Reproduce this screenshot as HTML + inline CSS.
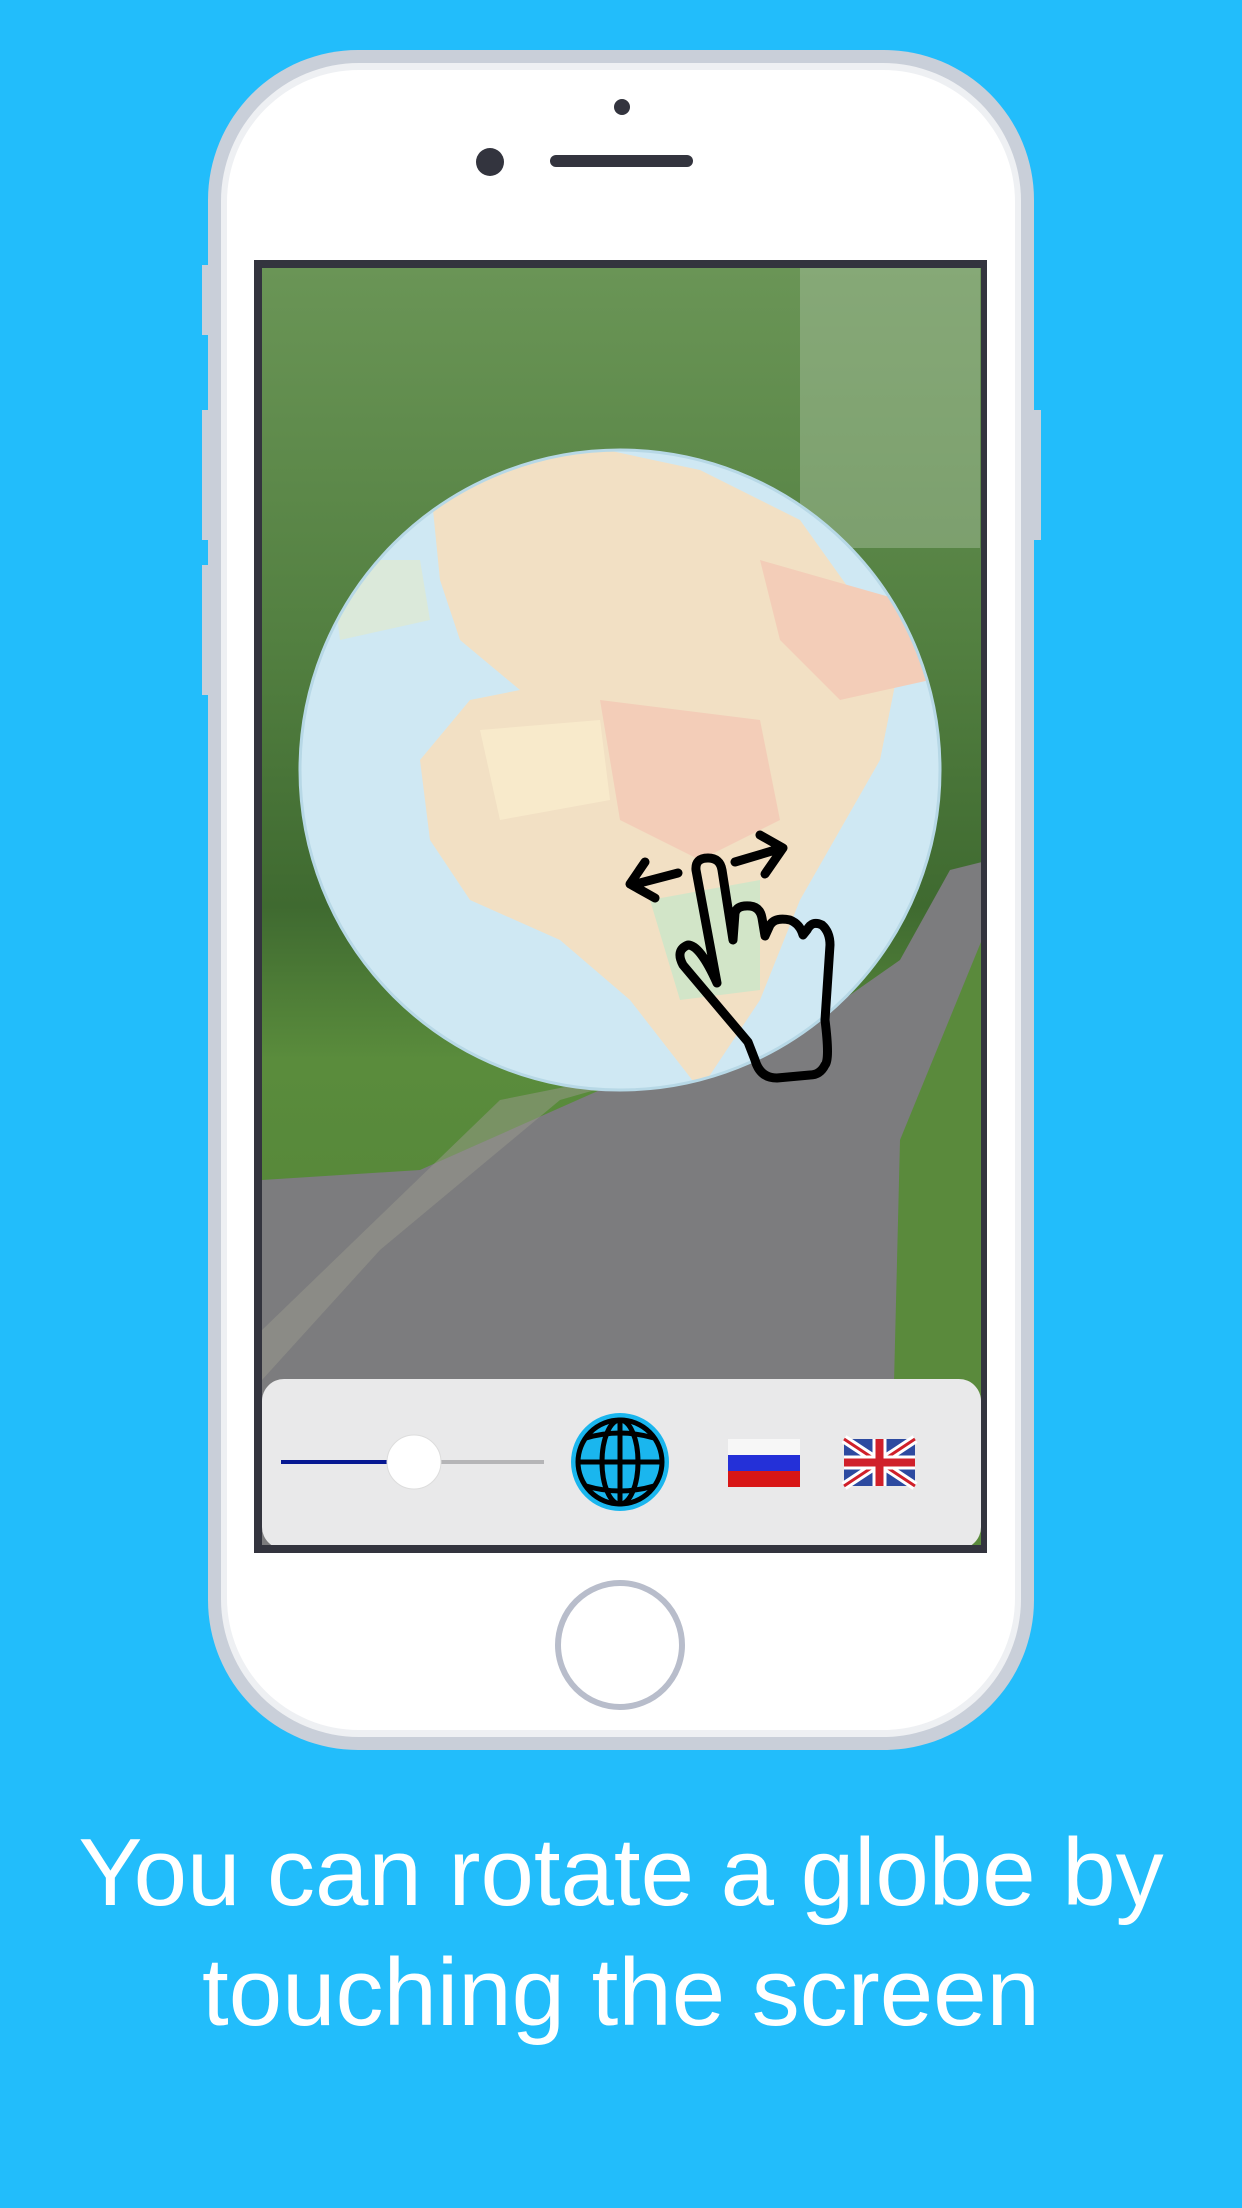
<!DOCTYPE html>
<html><head><meta charset="utf-8"><style>
html,body{margin:0;padding:0}
body{width:1242px;height:2208px;background:#22bdfb;position:relative;overflow:hidden;font-family:"Liberation Sans",sans-serif}
.abs{position:absolute}
.txt{position:absolute;left:0;width:1242px;text-align:center;color:#fff;font-size:96px;line-height:120px}
</style></head><body>
<svg class="abs" style="left:0;top:0" width="1242" height="1760" viewBox="0 0 1242 1760">
<defs>
<linearGradient id="sky" x1="0" y1="0" x2="0" y2="1">
<stop offset="0" stop-color="#6a9556"/><stop offset="0.3" stop-color="#527f40"/><stop offset="0.5" stop-color="#3f6a30"/><stop offset="0.62" stop-color="#5a8c3c"/><stop offset="1" stop-color="#4f7f35"/></linearGradient>
<clipPath id="scr"><rect x="262" y="268" width="719" height="1277"/></clipPath>
<clipPath id="gc"><circle cx="620" cy="770" r="320"/></clipPath>
</defs>
<rect x="202" y="265" width="8" height="70" fill="#c9cfd9"/>
<rect x="202" y="410" width="8" height="130" fill="#c9cfd9"/>
<rect x="202" y="565" width="8" height="130" fill="#c9cfd9"/>
<rect x="1033" y="410" width="8" height="130" fill="#c9cfd9"/>
<rect x="208" y="50" width="826" height="1700" rx="150" fill="#c9cfd9"/>
<rect x="221" y="63" width="800" height="1674" rx="138" fill="#eef0f3"/>
<rect x="227" y="70" width="788" height="1660" rx="132" fill="#fff"/>
<circle cx="622" cy="107" r="8" fill="#33343e"/>
<circle cx="490" cy="162" r="14" fill="#33343e"/>
<rect x="550" y="155" width="143" height="12" rx="6" fill="#33343e"/>
<rect x="254" y="260" width="733" height="1293" fill="#33343e"/>
<g clip-path="url(#scr)">
<rect x="262" y="268" width="719" height="1277" fill="url(#sky)"/>
<rect x="800" y="268" width="180" height="280" fill="#a9c2a0" opacity="0.45"/>
<path d="M262,1180 L262,1545 L560,1545 L990,1545 L990,860 L950,870 L900,960 L800,1030 L600,1090 L420,1170 Z" fill="#7c7c7e"/>
<path d="M262,1330 L500,1100 L700,1060 L560,1100 L380,1250 L262,1380Z" fill="#9a9a8e" opacity="0.5"/>
<path d="M890,1545 L900,1140 L990,920 L990,1545Z" fill="#5a8a3c"/>
<circle cx="620" cy="770" r="320" fill="#cfe8f3"/>
<g clip-path="url(#gc)">
<path d="M430,480 L560,440 L700,470 L800,520 L900,660 L880,760 L800,900 L760,1000 L700,1090 L630,1000 L560,940 L470,900 L430,840 L420,760 L470,700 L520,690 L460,640 L440,580Z" fill="#f2e0c4"/>
<path d="M600,700 L760,720 L780,820 L700,860 L620,820Z" fill="#f3cdb8"/>
<path d="M480,730 L600,720 L610,800 L500,820Z" fill="#f8eacb"/>
<path d="M650,900 L760,880 L760,990 L680,1000Z" fill="#d2e5c8"/>
<path d="M760,560 L900,600 L930,680 L840,700 L780,640Z" fill="#f3cdb8"/>
<path d="M330,560 L420,560 L430,620 L340,640Z" fill="#dfe9cf" opacity="0.7"/>
</g>
<circle cx="620" cy="770" r="320" fill="none" stroke="#b7d8e6" stroke-width="3"/>
<g fill="none" stroke="#000" stroke-width="9" stroke-linecap="round" stroke-linejoin="round">
<path d="M717,983 L696,870 Q695,858 708,858 Q720,858 722,870 L733,940 L735,913 Q737,905 750,906 Q760,907 762,918 L765,936 L770,925 Q775,917 790,920 Q800,924 803,935 L807,930 Q812,920 822,925 Q830,932 830,945 L825,1020 Q830,1060 825,1065 Q820,1075 810,1075 L777,1078 Q760,1078 755,1060 L748,1042 L683,965 Q675,950 688,945 Q700,945 717,983"/>
<path d="M678,873 L632,885 M645,862 L630,884 L655,898"/>
<path d="M735,862 L782,848 M760,835 L783,848 L765,874"/>
</g>
<rect x="262" y="1379" width="719" height="170" rx="22" fill="#e9e9ea"/>
<rect x="281" y="1460" width="133" height="4" fill="#061892"/>
<rect x="414" y="1460" width="130" height="4" fill="#b5b5b7"/>
<circle cx="414" cy="1462" r="27" fill="#fff" stroke="#ddd" stroke-width="1"/>
<circle cx="620" cy="1462" r="49" fill="#1ab6ee"/>
<g fill="none" stroke="#000" stroke-width="5">
<circle cx="620" cy="1462" r="42"/>
<ellipse cx="620" cy="1462" rx="18" ry="42"/>
<line x1="620" y1="1420" x2="620" y2="1504"/>
<line x1="578" y1="1462" x2="662" y2="1462"/>
<path d="M586,1438 Q620,1428 654,1438 M586,1486 Q620,1496 654,1486"/>
</g>
<rect x="728" y="1439" width="72" height="16" fill="#f7f7f7"/>
<rect x="728" y="1455" width="72" height="16" fill="#2430d8"/>
<rect x="728" y="1471" width="72" height="16" fill="#d81616"/>
<g>
<rect x="844" y="1439" width="71" height="47" fill="#2d4aa0"/>
<path d="M844,1439 L915,1486 M915,1439 L844,1486" stroke="#fff" stroke-width="9"/>
<path d="M844,1439 L915,1486 M915,1439 L844,1486" stroke="#d0202a" stroke-width="3"/>
<path d="M879.5,1439 V1486 M844,1462.5 H915" stroke="#fff" stroke-width="14"/>
<path d="M879.5,1439 V1486 M844,1462.5 H915" stroke="#d0202a" stroke-width="8"/>
</g>
</g>
<circle cx="620" cy="1645" r="62" fill="none" stroke="#b8bdcb" stroke-width="6"/>
</svg>
<div class="txt" style="top:1813px">You can rotate a globe by</div>
<div class="txt" style="top:1933px">touching the screen</div>
</body></html>
